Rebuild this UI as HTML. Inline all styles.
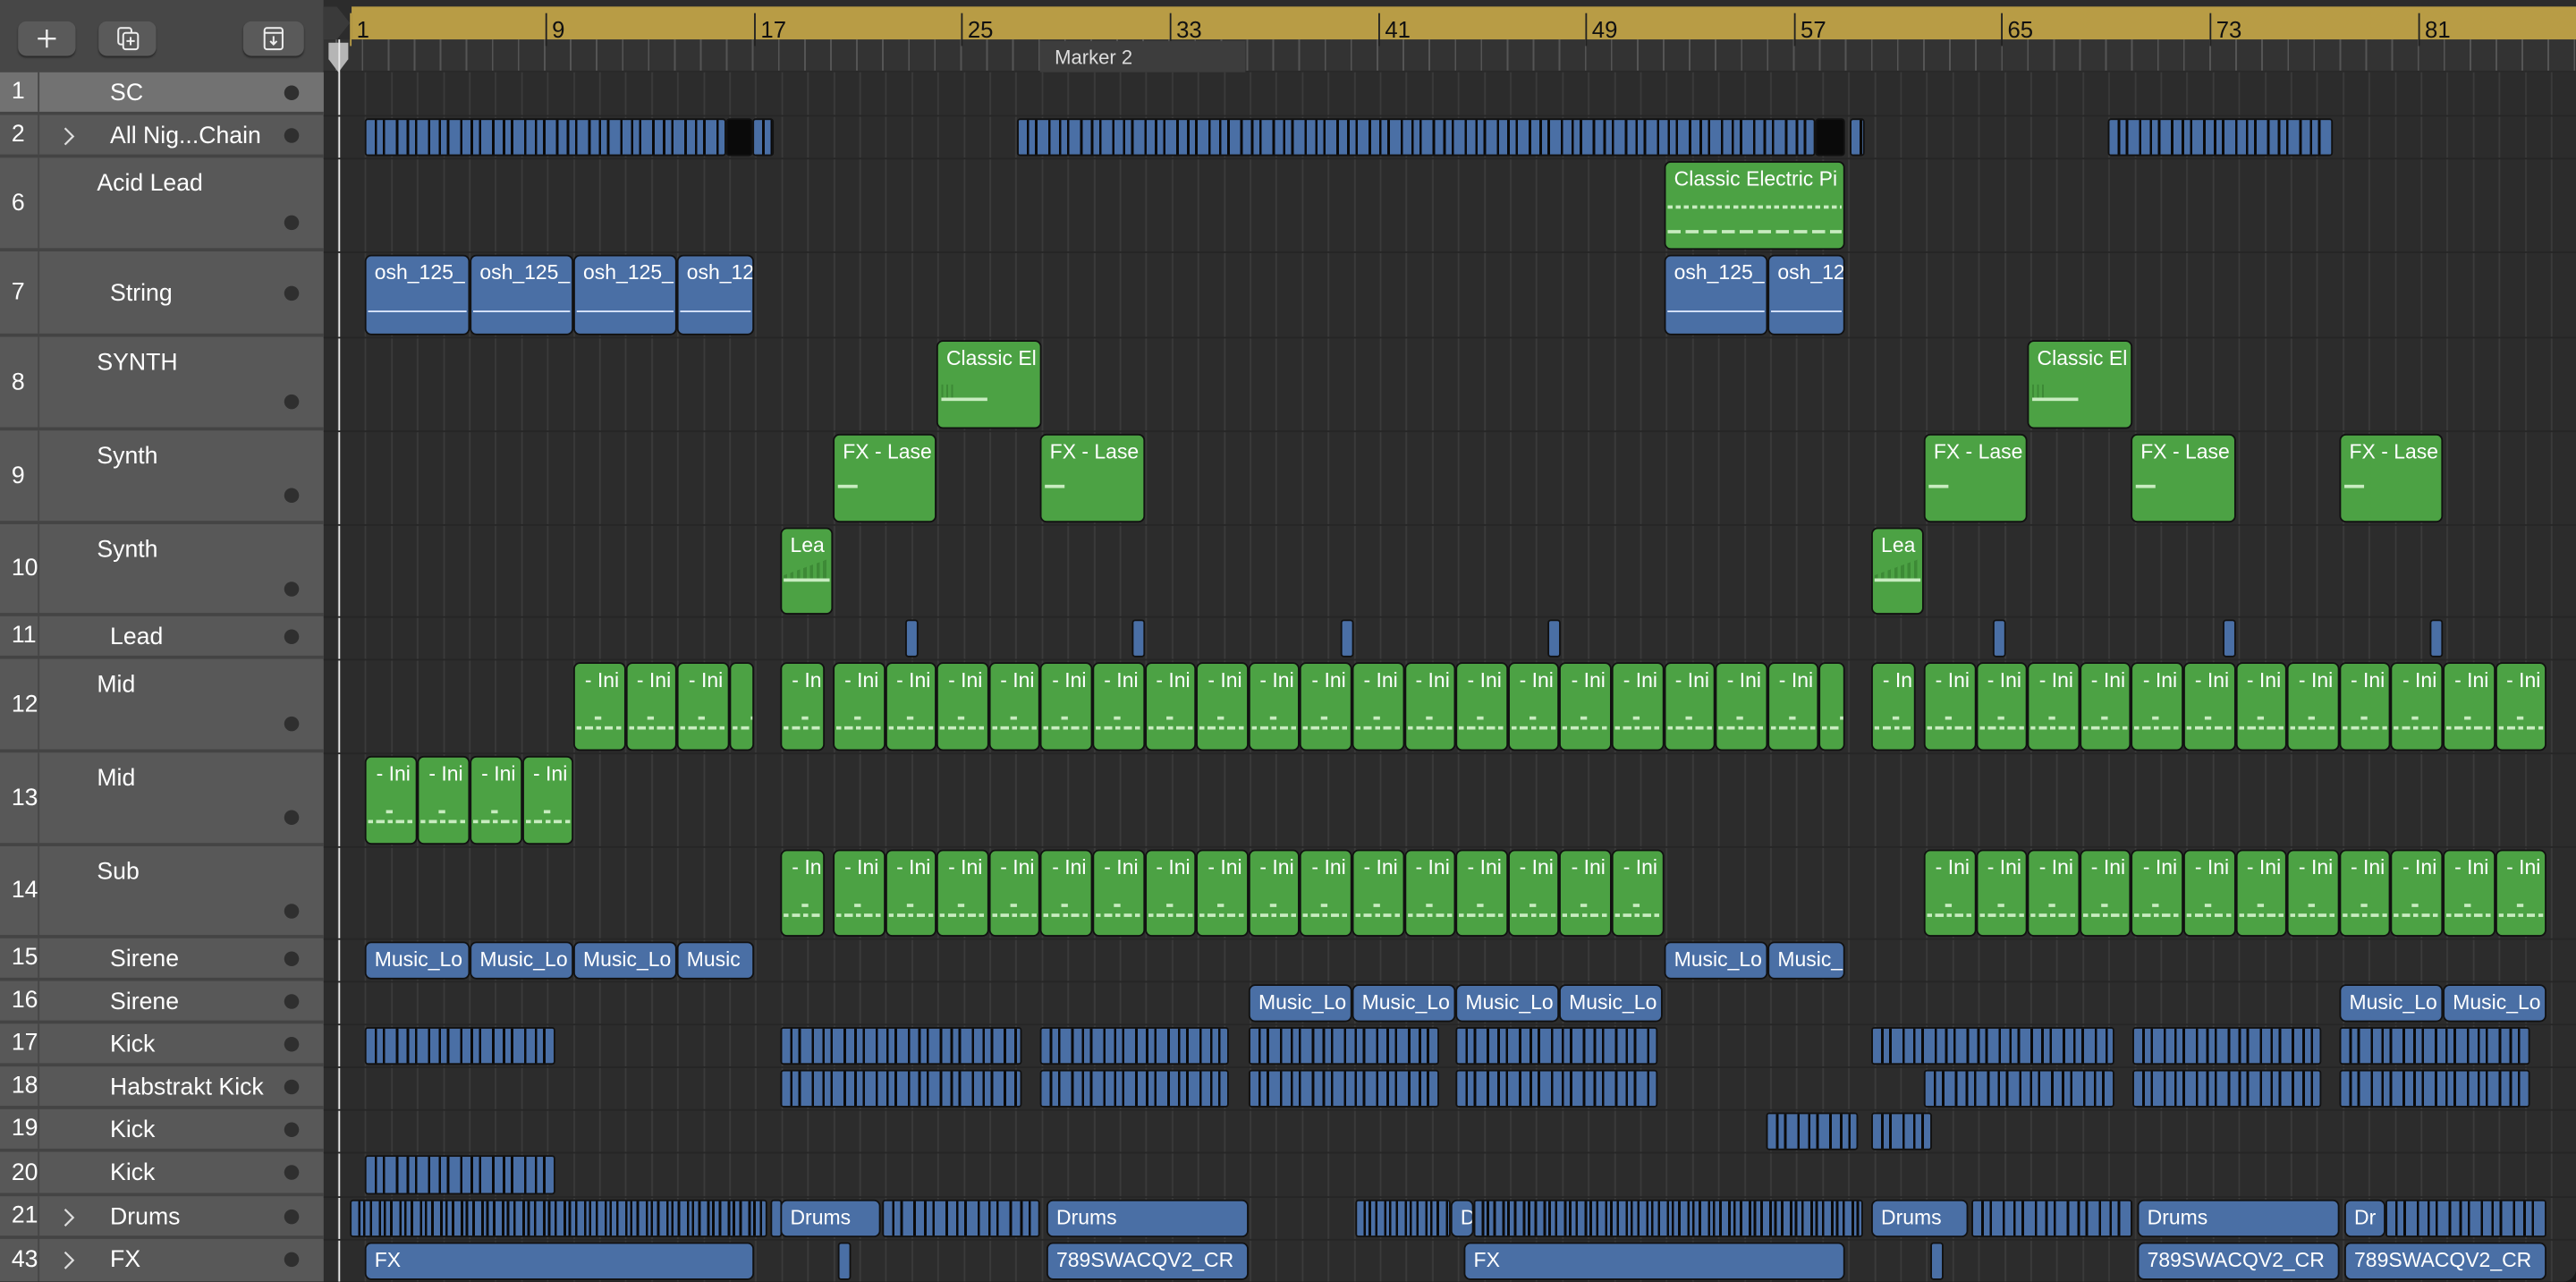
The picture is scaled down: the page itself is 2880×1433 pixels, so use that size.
<!DOCTYPE html>
<html><head><meta charset="utf-8"><style>
*{margin:0;padding:0;box-sizing:border-box}
html,body{width:2880px;height:1432px;overflow:hidden;background:#1a1a1a}
#s{position:absolute;left:0;top:0;width:1568px;height:780px;transform:scale(1.836735);transform-origin:0 0;font-family:"Liberation Sans",sans-serif;background:#2c2c2c;overflow:hidden;border-radius:0 0 8px 0}
.abs{position:absolute}
#hdr{left:0;top:0;width:197px;height:44px;background:#474747}
.btn{position:absolute;top:13px;height:21px;width:35px;background:#5a5a5a;border-radius:5px;box-shadow:0 1px 1px #2a2a2a}
#tl{left:0;top:44px;width:197px;height:736px;background:#585858}
.th{position:absolute;left:0;width:197px;border-bottom:2px solid #444;color:#fff;font-size:14.5px}
.th .n{position:absolute;left:0;width:24px;top:0;bottom:0;border-right:1px solid #464646;display:flex;align-items:center;padding-left:7px;font-size:14.5px}
.th .nm{position:absolute;left:67px}
.th .dot{position:absolute;left:173px;width:9px;height:9px;border-radius:50%;background:#2f2f2f}
.th .ch{position:absolute;left:38px}
#gap{left:197px;top:0;width:8px;height:780px;background:#2c2c2c}
#ruler{left:214px;top:4px;width:1354px;height:20px;background:#b89c45}
#ticks{left:197px;top:24px;width:1371px;height:20px;background:#333;background-image:repeating-linear-gradient(90deg,transparent 0 7.3px,#555 7.3px 8.3px,transparent 8.3px 15.84px);border-bottom:1px solid #2a2a2a}
.rn{position:absolute;top:4px;height:20px;border-left:1px solid #222;padding-left:3px;font-size:14px;color:#111;line-height:20px}
#arr{left:205px;top:44px;width:1363px;height:736px;background-color:#2c2c2c;background-image:repeating-linear-gradient(90deg,#3b3b3b 0 1px,transparent 1px 15.84px);background-position:1.3px 0}
.sep{position:absolute;left:197px;width:1371px;height:1px;background:#262626}
.row{position:absolute;left:0;width:1568px}
.r{position:absolute;top:2px;bottom:1px;border:1px solid #111;border-radius:4px;overflow:hidden;color:#fff;font-size:12.5px;padding:3px 0 0 5px;white-space:nowrap}
.b{background:#4a6fa5}
.g{background:#4ca244}
.s{border-radius:2px;background:repeating-linear-gradient(90deg,#4a6fa5 0 5px,#0a0a0a 5px 6.5px,#4a6fa5 6.5px 10px,#0a0a0a 10px 11.5px,#4a6fa5 11.5px 18px,#0a0a0a 18px 19.5px)}
.d{border-radius:2px;background:repeating-linear-gradient(90deg,#4a6fa5 0 4px,#0a0a0a 4px 5.5px,#4a6fa5 5.5px 7px,#0a0a0a 7px 8.5px,#4a6fa5 8.5px 11px,#0a0a0a 11px 12.5px)}
.i{padding-left:6px}
.i::after{content:"";position:absolute;left:1px;right:1px;top:38px;height:2px;background:repeating-linear-gradient(90deg,#c8ecc0 0 3px,transparent 3px 5px,#c8ecc0 5px 10px,transparent 10px 12px)}
.i::before{content:"";position:absolute;left:12px;width:4px;top:32px;height:2px;background:#c8ecc0}
.o::after{content:"";position:absolute;left:1px;right:1px;top:33px;height:1px;background:#dde8ff}
.fxl::after{content:"";position:absolute;left:2px;width:12px;top:30px;height:2px;background:#c8ecc0}
.ce::after{content:"";position:absolute;left:2px;width:28px;top:34px;height:2px;background:#c8ecc0}
.ce::before{content:"";position:absolute;left:2px;width:8px;top:26px;height:8px;background:repeating-linear-gradient(90deg,#3d8a36 0 1px,transparent 1px 3px)}
.le::after{content:"";position:absolute;left:1px;width:28px;top:30px;height:2px;background:#c8ecc0}
.le::before{content:"";position:absolute;left:1px;width:28px;top:16px;height:14px;background:linear-gradient(160deg,transparent 50%,#3d8a36 50%);-webkit-mask:repeating-linear-gradient(90deg,#000 0 2px,transparent 2px 4px)}
</style></head><body><div id="s">
<div id="hdr" class="abs">
 <div class="btn" style="left:11px"><svg width="35" height="21"><path d="M17.5 5v11M12 10.5h11" stroke="#eee" stroke-width="1.3"/></svg></div>
 <div class="btn" style="left:60px;width:35px"><svg width="35" height="21"><rect x="12" y="4" width="8" height="10" rx="1.5" fill="none" stroke="#eee" stroke-width="1.1"/><rect x="15" y="7" width="9" height="10" rx="1.5" fill="#5a5a5a" stroke="#eee" stroke-width="1.1"/><path d="M19.5 9.5v5M17 12h5" stroke="#eee" stroke-width="1.1"/></svg></div>
 <div class="btn" style="left:148px;width:37px"><svg width="37" height="21"><rect x="13" y="4" width="11" height="13" rx="1.5" fill="none" stroke="#eee" stroke-width="1.1"/><path d="M13 7h11M18.5 9v5M16.5 12l2 2 2-2" fill="none" stroke="#eee" stroke-width="1.1"/></svg></div>
</div>
<div id="gap" class="abs"></div>
<div id="ticks" class="abs"></div>
<svg class="abs" style="left:197px;top:4px" width="16" height="40"><path d="M0 0h8l8 10-8 10H0z" fill="#3a3a3a"/><path d="M3 22h12v10l-6 8-6-8z" fill="#b5b5b5"/></svg>
<div id="ruler" class="abs">
 <div class="rn" style="left:-1px;border-left-color:#b89c45">1</div>
 <div class="rn" style="left:118px">9</div><div class="rn" style="left:245px">17</div><div class="rn" style="left:371px">25</div><div class="rn" style="left:498px">33</div><div class="rn" style="left:625px">41</div><div class="rn" style="left:751px">49</div><div class="rn" style="left:878px">57</div><div class="rn" style="left:1004px">65</div><div class="rn" style="left:1131px">73</div><div class="rn" style="left:1258px">81</div>
</div>
<div class="abs" style="left:633px;top:25px;width:125px;height:19px;background:#3d3d3d;color:#ddd;font-size:12px;padding:3px 0 0 9px">Marker 2</div>
<div id="tl" class="abs"></div>
<div id="arr" class="abs"></div>
<div class="abs" style="left:205.5px;top:24px;width:1px;height:756px;background:#e8e8e8"></div>

<!-- track headers -->
<div class="th" style="top:44px;height:26px;background:#727272"><div class="n">1</div><span class="nm" style="top:5px">SC</span><div class="dot" style="top:8px"></div></div>
<div class="th" style="top:70px;height:26px"><div class="n">2</div><svg class="ch" style="top:7px" width="8" height="12"><path d="M1.5 1l5 5-5 5" fill="none" stroke="#ddd" stroke-width="1.2"/></svg><span class="nm" style="top:5px">All Nig...Chain</span><div class="dot" style="top:8px"></div></div>
<div class="th" style="top:96px;height:57px"><div class="n">6</div><span class="nm" style="left:59px;top:8px">Acid Lead</span><div class="dot" style="top:35px"></div></div>
<div class="th" style="top:153px;height:52px"><div class="n">7</div><span class="nm" style="top:18px">String</span><div class="dot" style="top:21px"></div></div>
<div class="th" style="top:205px;height:57px"><div class="n">8</div><span class="nm" style="left:59px;top:8px">SYNTH</span><div class="dot" style="top:35px"></div></div>
<div class="th" style="top:262px;height:57px"><div class="n">9</div><span class="nm" style="left:59px;top:8px">Synth</span><div class="dot" style="top:35px"></div></div>
<div class="th" style="top:319px;height:56px"><div class="n">10</div><span class="nm" style="left:59px;top:8px">Synth</span><div class="dot" style="top:35px"></div></div>
<div class="th" style="top:375px;height:26px"><div class="n">11</div><span class="nm" style="top:5px">Lead</span><div class="dot" style="top:8px"></div></div>
<div class="th" style="top:401px;height:57px"><div class="n">12</div><span class="nm" style="left:59px;top:8px">Mid</span><div class="dot" style="top:35px"></div></div>
<div class="th" style="top:458px;height:57px"><div class="n">13</div><span class="nm" style="left:59px;top:8px">Mid</span><div class="dot" style="top:35px"></div></div>
<div class="th" style="top:515px;height:56px"><div class="n">14</div><span class="nm" style="left:59px;top:8px">Sub</span><div class="dot" style="top:35px"></div></div>
<div class="th" style="top:571px;height:26px"><div class="n">15</div><span class="nm" style="top:5px">Sirene</span><div class="dot" style="top:8px"></div></div>
<div class="th" style="top:597px;height:26px"><div class="n">16</div><span class="nm" style="top:5px">Sirene</span><div class="dot" style="top:8px"></div></div>
<div class="th" style="top:623px;height:26px"><div class="n">17</div><span class="nm" style="top:5px">Kick</span><div class="dot" style="top:8px"></div></div>
<div class="th" style="top:649px;height:26px"><div class="n">18</div><span class="nm" style="top:5px">Habstrakt Kick</span><div class="dot" style="top:8px"></div></div>
<div class="th" style="top:675px;height:26px"><div class="n">19</div><span class="nm" style="top:5px">Kick</span><div class="dot" style="top:8px"></div></div>
<div class="th" style="top:701px;height:27px"><div class="n">20</div><span class="nm" style="top:5px">Kick</span><div class="dot" style="top:8px"></div></div>
<div class="th" style="top:728px;height:26px"><div class="n">21</div><svg class="ch" style="top:7px" width="8" height="12"><path d="M1.5 1l5 5-5 5" fill="none" stroke="#ddd" stroke-width="1.2"/></svg><span class="nm" style="top:5px">Drums</span><div class="dot" style="top:8px"></div></div>
<div class="th" style="top:754px;height:26px;border-bottom:none"><div class="n">43</div><svg class="ch" style="top:7px" width="8" height="12"><path d="M1.5 1l5 5-5 5" fill="none" stroke="#ddd" stroke-width="1.2"/></svg><span class="nm" style="top:5px">FX</span><div class="dot" style="top:8px"></div></div>

<!-- row separators -->
<div class="sep" style="top:70px"></div><div class="sep" style="top:96px"></div><div class="sep" style="top:153px"></div><div class="sep" style="top:205px"></div><div class="sep" style="top:262px"></div><div class="sep" style="top:319px"></div><div class="sep" style="top:375px"></div><div class="sep" style="top:401px"></div><div class="sep" style="top:458px"></div><div class="sep" style="top:515px"></div><div class="sep" style="top:571px"></div><div class="sep" style="top:597px"></div><div class="sep" style="top:623px"></div><div class="sep" style="top:649px"></div><div class="sep" style="top:675px"></div><div class="sep" style="top:701px"></div><div class="sep" style="top:728px"></div><div class="sep" style="top:754px"></div>

<!-- row 2 -->
<div class="row" style="top:70px;height:26px">
<div class="r s" style="left:222px;width:220px"></div>
<div class="r d" style="left:442px;width:16px;background:#0a0a0a"></div>
<div class="r s" style="left:458px;width:13px"></div>
<div class="r s" style="left:619px;width:486px"></div>
<div class="r" style="left:1105px;width:18px;background:#0a0a0a;border-radius:2px"></div>
<div class="r s" style="left:1126px;width:9px"></div>
<div class="r s" style="left:1283px;width:137px"></div>
</div>
<!-- row 6 -->
<div class="row" style="top:96px;height:57px">
<div class="r g" style="left:1013px;width:110px">Classic Electric Pi<div class="abs" style="left:1px;right:1px;top:26px;height:2px;background:repeating-linear-gradient(90deg,#c8ecc0 0 3px,transparent 3px 5px)"></div><div class="abs" style="left:1px;right:1px;top:41px;height:2px;background:repeating-linear-gradient(90deg,#c8ecc0 0 8px,transparent 8px 11px)"></div></div>
</div>
<!-- row 7 -->
<div class="row" style="top:153px;height:52px">
<div class="r b o" style="left:222px;width:64px">osh_125_</div><div class="r b o" style="left:286px;width:63px">osh_125_</div><div class="r b o" style="left:349px;width:63px">osh_125_</div><div class="r b o" style="left:412px;width:47px">osh_12</div>
<div class="r b o" style="left:1013px;width:63px">osh_125_</div><div class="r b o" style="left:1076px;width:47px">osh_12</div>
</div>
<!-- row 8 -->
<div class="row" style="top:205px;height:57px">
<div class="r g ce" style="left:570px;width:64px">Classic El</div><div class="r g ce" style="left:1234px;width:64px">Classic El</div>
</div>
<!-- row 9 -->
<div class="row" style="top:262px;height:57px">
<div class="r g fxl" style="left:507px;width:63px">FX - Lase</div><div class="r g fxl" style="left:633px;width:64px">FX - Lase</div><div class="r g fxl" style="left:1171px;width:63px">FX - Lase</div><div class="r g fxl" style="left:1297px;width:64px">FX - Lase</div><div class="r g fxl" style="left:1424px;width:63px">FX - Lase</div>
</div>
<!-- row 10 -->
<div class="row" style="top:319px;height:56px">
<div class="r g le" style="left:475px;width:32px">Lea</div><div class="r g le" style="left:1139px;width:32px">Lea</div>
</div>
<!-- row 11 -->
<div class="row" style="top:375px;height:26px">
<div class="r b" style="left:551px;width:8px;border-radius:2px"></div><div class="r b" style="left:689px;width:8px;border-radius:2px"></div><div class="r b" style="left:816px;width:8px;border-radius:2px"></div><div class="r b" style="left:942px;width:8px;border-radius:2px"></div><div class="r b" style="left:1213px;width:8px;border-radius:2px"></div><div class="r b" style="left:1353px;width:8px;border-radius:2px"></div><div class="r b" style="left:1479px;width:8px;border-radius:2px"></div>
</div>
<!-- row 12 -->
<div class="row" style="top:401px;height:57px">
<div class="r g i" style="left:349px;width:31.6px">- Ini</div><div class="r g i" style="left:380.6px;width:31.6px">- Ini</div><div class="r g i" style="left:412.2px;width:31.6px">- Ini</div><div class="r g i" style="left:443.8px;width:15px"></div>
<div class="r g i" style="left:475px;width:27px">- In</div>
<div class="r g i" style="left:507px;width:31.6px">- Ini</div><div class="r g i" style="left:538.6px;width:31.6px">- Ini</div><div class="r g i" style="left:570.2px;width:31.6px">- Ini</div><div class="r g i" style="left:601.8px;width:31.6px">- Ini</div><div class="r g i" style="left:633.4px;width:31.6px">- Ini</div><div class="r g i" style="left:665px;width:31.6px">- Ini</div><div class="r g i" style="left:696.6px;width:31.6px">- Ini</div><div class="r g i" style="left:728.2px;width:31.6px">- Ini</div><div class="r g i" style="left:759.8px;width:31.6px">- Ini</div><div class="r g i" style="left:791.4px;width:31.6px">- Ini</div><div class="r g i" style="left:823px;width:31.6px">- Ini</div><div class="r g i" style="left:854.6px;width:31.6px">- Ini</div><div class="r g i" style="left:886.2px;width:31.6px">- Ini</div><div class="r g i" style="left:917.8px;width:31.6px">- Ini</div><div class="r g i" style="left:949.4px;width:31.6px">- Ini</div><div class="r g i" style="left:981px;width:31.6px">- Ini</div><div class="r g i" style="left:1012.6px;width:31.6px">- Ini</div><div class="r g i" style="left:1044.2px;width:31.6px">- Ini</div><div class="r g i" style="left:1075.8px;width:31.6px">- Ini</div><div class="r g i" style="left:1107.4px;width:15.6px"></div>
<div class="r g i" style="left:1139px;width:27px">- In</div>
<div class="r g i" style="left:1171px;width:31.6px">- Ini</div><div class="r g i" style="left:1202.6px;width:31.6px">- Ini</div><div class="r g i" style="left:1234.2px;width:31.6px">- Ini</div><div class="r g i" style="left:1265.8px;width:31.6px">- Ini</div><div class="r g i" style="left:1297.4px;width:31.6px">- Ini</div><div class="r g i" style="left:1329px;width:31.6px">- Ini</div><div class="r g i" style="left:1360.6px;width:31.6px">- Ini</div><div class="r g i" style="left:1392.2px;width:31.6px">- Ini</div><div class="r g i" style="left:1423.8px;width:31.6px">- Ini</div><div class="r g i" style="left:1455.4px;width:31.6px">- Ini</div><div class="r g i" style="left:1487px;width:31.6px">- Ini</div><div class="r g i" style="left:1518.6px;width:31.6px">- Ini</div>
</div>
<!-- row 13 -->
<div class="row" style="top:458px;height:57px">
<div class="r g i" style="left:222px;width:32px">- Ini</div><div class="r g i" style="left:254px;width:32px">- Ini</div><div class="r g i" style="left:286px;width:31.5px">- Ini</div><div class="r g i" style="left:317.5px;width:31.5px">- Ini</div>
</div>
<!-- row 14 -->
<div class="row" style="top:515px;height:56px">
<div class="r g i" style="left:475px;width:27px">- In</div>
<div class="r g i" style="left:507px;width:31.6px">- Ini</div><div class="r g i" style="left:538.6px;width:31.6px">- Ini</div><div class="r g i" style="left:570.2px;width:31.6px">- Ini</div><div class="r g i" style="left:601.8px;width:31.6px">- Ini</div><div class="r g i" style="left:633.4px;width:31.6px">- Ini</div><div class="r g i" style="left:665px;width:31.6px">- Ini</div><div class="r g i" style="left:696.6px;width:31.6px">- Ini</div><div class="r g i" style="left:728.2px;width:31.6px">- Ini</div><div class="r g i" style="left:759.8px;width:31.6px">- Ini</div><div class="r g i" style="left:791.4px;width:31.6px">- Ini</div><div class="r g i" style="left:823px;width:31.6px">- Ini</div><div class="r g i" style="left:854.6px;width:31.6px">- Ini</div><div class="r g i" style="left:886.2px;width:31.6px">- Ini</div><div class="r g i" style="left:917.8px;width:31.6px">- Ini</div><div class="r g i" style="left:949.4px;width:31.6px">- Ini</div><div class="r g i" style="left:981px;width:31.6px">- Ini</div>
<div class="r g i" style="left:1171px;width:31.6px">- Ini</div><div class="r g i" style="left:1202.6px;width:31.6px">- Ini</div><div class="r g i" style="left:1234.2px;width:31.6px">- Ini</div><div class="r g i" style="left:1265.8px;width:31.6px">- Ini</div><div class="r g i" style="left:1297.4px;width:31.6px">- Ini</div><div class="r g i" style="left:1329px;width:31.6px">- Ini</div><div class="r g i" style="left:1360.6px;width:31.6px">- Ini</div><div class="r g i" style="left:1392.2px;width:31.6px">- Ini</div><div class="r g i" style="left:1423.8px;width:31.6px">- Ini</div><div class="r g i" style="left:1455.4px;width:31.6px">- Ini</div><div class="r g i" style="left:1487px;width:31.6px">- Ini</div><div class="r g i" style="left:1518.6px;width:31.6px">- Ini</div>
</div>
<!-- row 15 -->
<div class="row" style="top:571px;height:26px">
<div class="r b" style="left:222px;width:64px">Music_Lo</div><div class="r b" style="left:286px;width:63px">Music_Lo</div><div class="r b" style="left:349px;width:63px">Music_Lo</div><div class="r b" style="left:412px;width:47px">Music</div>
<div class="r b" style="left:1013px;width:63px">Music_Lo</div><div class="r b" style="left:1076px;width:47px">Music_</div>
</div>
<!-- row 16 -->
<div class="row" style="top:597px;height:26px">
<div class="r b" style="left:760px;width:63px">Music_Lo</div><div class="r b" style="left:823px;width:63px">Music_Lo</div><div class="r b" style="left:886px;width:63px">Music_Lo</div><div class="r b" style="left:949px;width:63px">Music_Lo</div>
<div class="r b" style="left:1424px;width:63px">Music_Lo</div><div class="r b" style="left:1487px;width:63px">Music_Lo</div>
</div>
<!-- row 17 -->
<div class="row" style="top:623px;height:26px">
<div class="r s" style="left:222px;width:116px"></div><div class="r s" style="left:475px;width:147px"></div><div class="r s" style="left:633px;width:115px"></div><div class="r s" style="left:760px;width:116px"></div><div class="r s" style="left:886px;width:123px"></div><div class="r s" style="left:1139px;width:148px"></div><div class="r s" style="left:1298px;width:115px"></div><div class="r s" style="left:1424px;width:116px"></div>
</div>
<!-- row 18 -->
<div class="row" style="top:649px;height:26px">
<div class="r s" style="left:475px;width:147px"></div><div class="r s" style="left:633px;width:115px"></div><div class="r s" style="left:760px;width:116px"></div><div class="r s" style="left:886px;width:123px"></div><div class="r s" style="left:1171px;width:116px"></div><div class="r s" style="left:1298px;width:115px"></div><div class="r s" style="left:1424px;width:116px"></div>
</div>
<!-- row 19 -->
<div class="row" style="top:675px;height:26px">
<div class="r s" style="left:1075px;width:56px"></div><div class="r s" style="left:1139px;width:37px"></div>
</div>
<!-- row 20 -->
<div class="row" style="top:701px;height:27px">
<div class="r s" style="left:222px;width:116px"></div>
</div>
<!-- row 21 -->
<div class="row" style="top:728px;height:26px">
<div class="r d" style="left:213px;width:254px"></div><div class="r b" style="left:469px;width:6px;border-radius:2px"></div>
<div class="r b" style="left:475px;width:61px">Drums</div>
<div class="r s" style="left:537px;width:96px"></div>
<div class="r b" style="left:637px;width:123px">Drums</div>
<div class="r d" style="left:825px;width:58px"></div>
<div class="r b" style="left:883px;width:14px">D</div>
<div class="r d" style="left:897px;width:237px"></div>
<div class="r b" style="left:1139px;width:59px">Drums</div>
<div class="r s" style="left:1200px;width:98px"></div>
<div class="r b" style="left:1301px;width:123px">Drums</div>
<div class="r b" style="left:1427px;width:25px">Dr</div>
<div class="r s" style="left:1452px;width:98px"></div>
</div>
<!-- row 43 -->
<div class="row" style="top:754px;height:26px">
<div class="r b" style="left:222px;width:237px">FX</div>
<div class="r b" style="left:510px;width:8px;border-radius:2px"></div>
<div class="r b" style="left:637px;width:123px">789SWACQV2_CR</div>
<div class="r b" style="left:891px;width:232px">FX</div>
<div class="r b" style="left:1175px;width:8px;border-radius:2px"></div>
<div class="r b" style="left:1301px;width:123px">789SWACQV2_CR</div>
<div class="r b" style="left:1427px;width:123px">789SWACQV2_CR</div>
</div>
</div></body></html>
